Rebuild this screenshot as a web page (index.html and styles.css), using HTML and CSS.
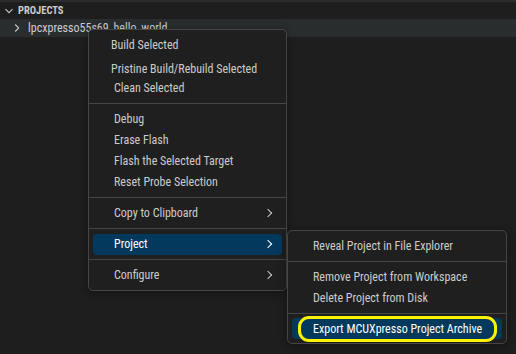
FILE: index.html
```html
<!DOCTYPE html>
<html lang="en">
<head>
<meta charset="UTF-8" />
<meta name="viewport" content="width=device-width, initial-scale=1" />
<title>Projects</title>
<link rel="stylesheet" href="styles.css">
</head>
<body>

<div class="sidebar">
  <div class="section-head">
    <svg class="twist" width="10" height="10" viewBox="0 0 10 10"><path d="M1.5 3.2 L5 6.7 L8.5 3.2" fill="none" stroke="#c5c5c5" stroke-width="1.1"/></svg>
    <span>PROJECTS</span>
  </div>
  <div class="tree-row">
    <svg class="twist" width="10" height="10" viewBox="0 0 10 10"><path d="M3.2 1.5 L6.7 5 L3.2 8.5" fill="none" stroke="#c5c5c5" stroke-width="1.1"/></svg>
    <span class="label">lpcxpresso55s69_hello_world</span>
  </div>
</div>

<!-- context menu -->
<div class="menu main-menu">
  <div class="item shifted">Build Selected</div>
  <div class="item shifted pristine">Pristine Build/Rebuild Selected</div>
  <div class="item clean">Clean Selected</div>
  <div class="sep"></div>
  <div class="item">Debug</div>
  <div class="item">Erase Flash</div>
  <div class="item">Flash the Selected Target</div>
  <div class="item">Reset Probe Selection</div>
  <div class="sep"></div>
  <div class="item">Copy to Clipboard <span class="arrow"></span></div>
  <div class="sep"></div>
  <div class="item active">Project <span class="arrow"></span></div>
  <div class="sep"></div>
  <div class="item">Configure <span class="arrow"></span></div>
</div>

<!-- submenu -->
<div class="menu sub-menu">
  <div class="item">Reveal Project in File Explorer</div>
  <div class="sep"></div>
  <div class="item">Remove Project from Workspace</div>
  <div class="item">Delete Project from Disk</div>
  <div class="sep"></div>
  <div class="item active export">Export MCUXpresso Project Archive
    <span class="ring"></span>
  </div>
</div>

</body>
</html>
```

FILE: styles.css
```css
body, html {
  margin: 0; padding: 0;
  height: 100%;
  background-color: #1e1e1e;
  overflow: hidden;
  font-family: 'Roboto Condensed', 'Roboto', sans-serif;
  color: #cccccc;
}

/* 側欄 */
.sidebar {
  border-top: 2px solid #2b2b2b;
}
.section-head {
  display: flex;
  align-items: center;
  height: 17px;
  padding-left: 4px;
  font-size: 10.5px;
  font-weight: bold;
  color: #cccccc;
  gap: 4px;
}
.tree-row {
  display: flex;
  align-items: center;
  height: 18px;
  padding-left: 12px;
  gap: 6px;
  background: #2a2d2e;
  font-size: 12px;
}
.tree-row .label {
  color: #c8cdd6;
}
.twist { flex: none; }

/* 選單 */
.menu {
  position: absolute;
  box-sizing: border-box;
  background: #1f1f1f;
  border: 1px solid #454545;
  border-radius: 5px;
  padding: 4px 0;
  font-size: 12px;
  box-shadow: 0 2px 8px rgba(0, 0, 0, 0.36);
}
.main-menu {
  left: 88px;
  top: 29px;
  width: 199px;
}
.sub-menu {
  left: 287px;
  top: 230px;
  width: 220px;
}

.item {
  position: relative;
  display: flex;
  align-items: center;
  height: 21px;
  margin: 0 4px;
  padding-left: 21px;
  border-radius: 4px;
  white-space: nowrap;
}
.item.shifted { padding-left: 18px; }
.item.pristine { margin-top: 3.5px; }
.item.clean { margin-top: -2px; }

.item.active {
  background: #04395e;
  color: #ffffff;
}

.arrow {
  margin-left: auto;
  margin-right: 11px;
  width: 5px;
  height: 5px;
  border-right: 1.2px solid #cccccc;
  border-top: 1.2px solid #cccccc;
  transform: rotate(45deg);
}
.active .arrow { border-color: #ffffff; }

.sep {
  height: 1px;
  margin: 4.5px 0;
  background: #454545;
}

/* 標註框 */
.ring {
  position: absolute;
  left: 6px;
  right: 5px;
  top: -2px;
  bottom: -3px;
  border: 3px solid #fff200;
  border-radius: 11px;
}
```
